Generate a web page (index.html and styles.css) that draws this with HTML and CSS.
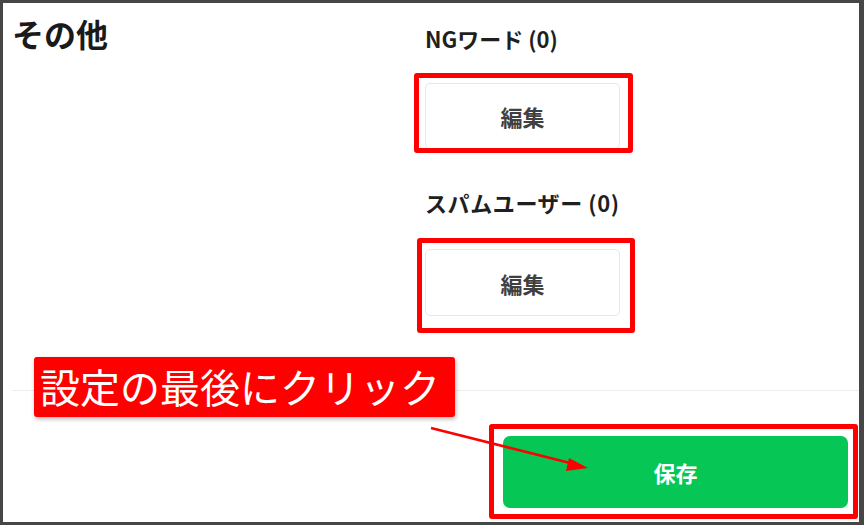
FILE: index.html
```html
<!DOCTYPE html>
<html lang="ja">
<head>
<meta charset="utf-8">
<title>その他</title>
<link rel="stylesheet" href="styles.css">
</head>
<body>
<div class="frame">
  <section class="section">
    <h2 class="section-title">その他</h2>
    <div class="fields">
      <div class="field">
        <div class="field-label">NGワード (0)</div>
        <button class="edit-btn" type="button">編集</button>
      </div>
      <div class="field field-second">
        <div class="field-label">スパムユーザー (0)</div>
        <button class="edit-btn edit-btn-tall" type="button">編集</button>
      </div>
    </div>
  </section>
  <div class="divider"></div>
  <footer class="footer">
    <button class="save-btn" type="button">保存</button>
  </footer>

  <div class="mark mark-ng"></div>
  <div class="mark mark-spam"></div>
  <div class="mark mark-save"></div>
  <div class="callout">設定の最後にクリック</div>
  <svg class="arrow" width="864" height="525" viewBox="0 0 864 525">
    <line x1="431" y1="428" x2="574" y2="464" stroke="#ff0000" stroke-width="2.6"/>
    <polygon points="588,468 569,458 566,471" fill="#ff0000"/>
  </svg>
</div>
</body>
</html>
```
FILE: styles.css
```css
* { box-sizing: border-box; }
html, body { margin: 0; padding: 0; }
body {
  width: 864px;
  height: 525px;
  overflow: hidden;
  font-family: "Noto Sans CJK JP", "Noto Sans", sans-serif;
  background: #ffffff;
}
.frame {
  position: relative;
  width: 864px;
  height: 525px;
  border: 3px solid #464646;
  border-right-width: 5px;
  background: #ffffff;
  display: flex;
  flex-direction: column;
}
.section {
  display: grid;
  grid-template-columns: 422px 1fr;
  padding-top: 11px;
}
.section-title {
  margin: 0;
  padding-left: 9px;
  font-size: 32px;
  line-height: 38px;
  font-weight: 700;
  color: #1a1a1a;
}
.fields {
  display: flex;
  flex-direction: column;
  padding-top: 9px;
}
.field {
  display: flex;
  flex-direction: column;
  align-items: flex-start;
  gap: 30px;
}
.field-second {
  margin-top: 38px;
  gap: 32px;
}
.field-label {
  font-size: 22px;
  line-height: 30px;
  font-weight: 700;
  color: #1f1f1f;
}
.field-second .field-label {
  letter-spacing: 0.6px;
}
.edit-btn {
  width: 195px;
  height: 66px;
  background: #ffffff;
  border: 1px solid #e6e6e6;
  border-radius: 5px;
  font-family: inherit;
  font-size: 22px;
  font-weight: 700;
  color: #404040;
  padding: 0;
}
.edit-btn-tall { height: 67px; }
.divider {
  margin-top: 74px;
  margin-left: 9px;
  height: 1px;
  background: #ededed;
}
.footer {
  display: flex;
  justify-content: flex-end;
  padding: 45px 11px 0 0;
}
.save-btn {
  width: 345px;
  height: 72px;
  border: 0;
  border-radius: 7px;
  background: #06c755;
  color: #ffffff;
  font-family: inherit;
  font-size: 22px;
  font-weight: 700;
  padding: 0;
}
/* annotation overlays */
.mark {
  position: absolute;
  border: 5px solid #ff0000;
  border-radius: 3px;
}
.mark-ng { left: 411px; top: 70px; width: 219px; height: 80px; }
.mark-spam { left: 414px; top: 235px; width: 218px; height: 95px; }
.mark-save { left: 486px; top: 421px; width: 369px; height: 95px; }
.callout {
  position: absolute;
  left: 31px;
  top: 354px;
  width: 421px;
  height: 60px;
  padding-left: 6px;
  background: #ff0000;
  border-radius: 3px;
  box-shadow: 1px 2px 4px rgba(0,0,0,0.3);
  color: #ffffff;
  font-size: 40px;
  line-height: 58px;
  font-weight: 400;
  white-space: nowrap;
}
.arrow {
  position: absolute;
  left: -3px;
  top: -3px;
  pointer-events: none;
}
```
